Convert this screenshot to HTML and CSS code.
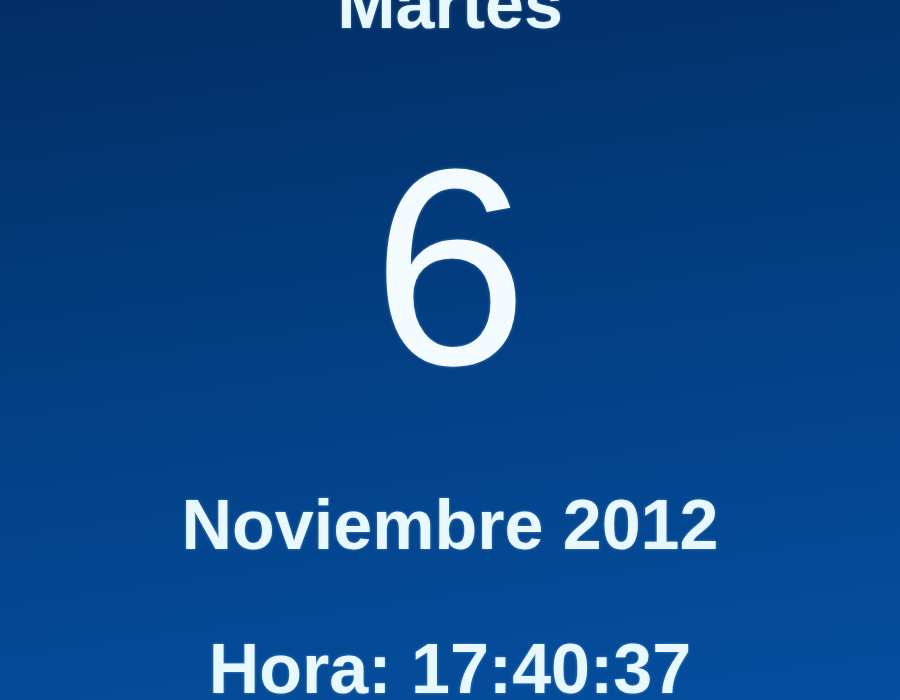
FILE: index.html
```html
<!DOCTYPE html>
<html lang="es">
<head>
<meta charset="utf-8">
<title>Calendario</title>
<link rel="stylesheet" href="styles.css">
</head>
<body>
<main class="widget">
  <div class="weekday">Martes</div>
  <div class="day">6</div>
  <div class="month">Noviembre 2012</div>
  <div class="time">Hora: 17:40:37</div>
</main>
</body>
</html>
```

FILE: styles.css
```css
html, body {
  margin: 0;
  padding: 0;
  height: 100%;
  overflow: hidden;
}
body {
  background: linear-gradient(172deg, #022e64 0%, #033e82 45%, #044f9f 100%);
  font-family: "Liberation Sans", Arial, sans-serif;
  color: #e8f8ff;
}
.widget {
  display: flex;
  flex-direction: column;
  align-items: center;
  text-align: center;
}
.weekday, .day, .month, .time {
  line-height: 1;
  white-space: nowrap;
  text-shadow: 0 0 3px rgba(190, 235, 255, 0.4);
}
.weekday, .month, .time {
  font-size: 70px;
  font-weight: bold;
}
.weekday {
  margin-top: -31px;
}
.day {
  font-size: 280px;
  margin-top: 88px;
  color: #f4fbff;
}
.month {
  margin-top: 83px;
}
.time {
  margin-top: 74px;
}
```
